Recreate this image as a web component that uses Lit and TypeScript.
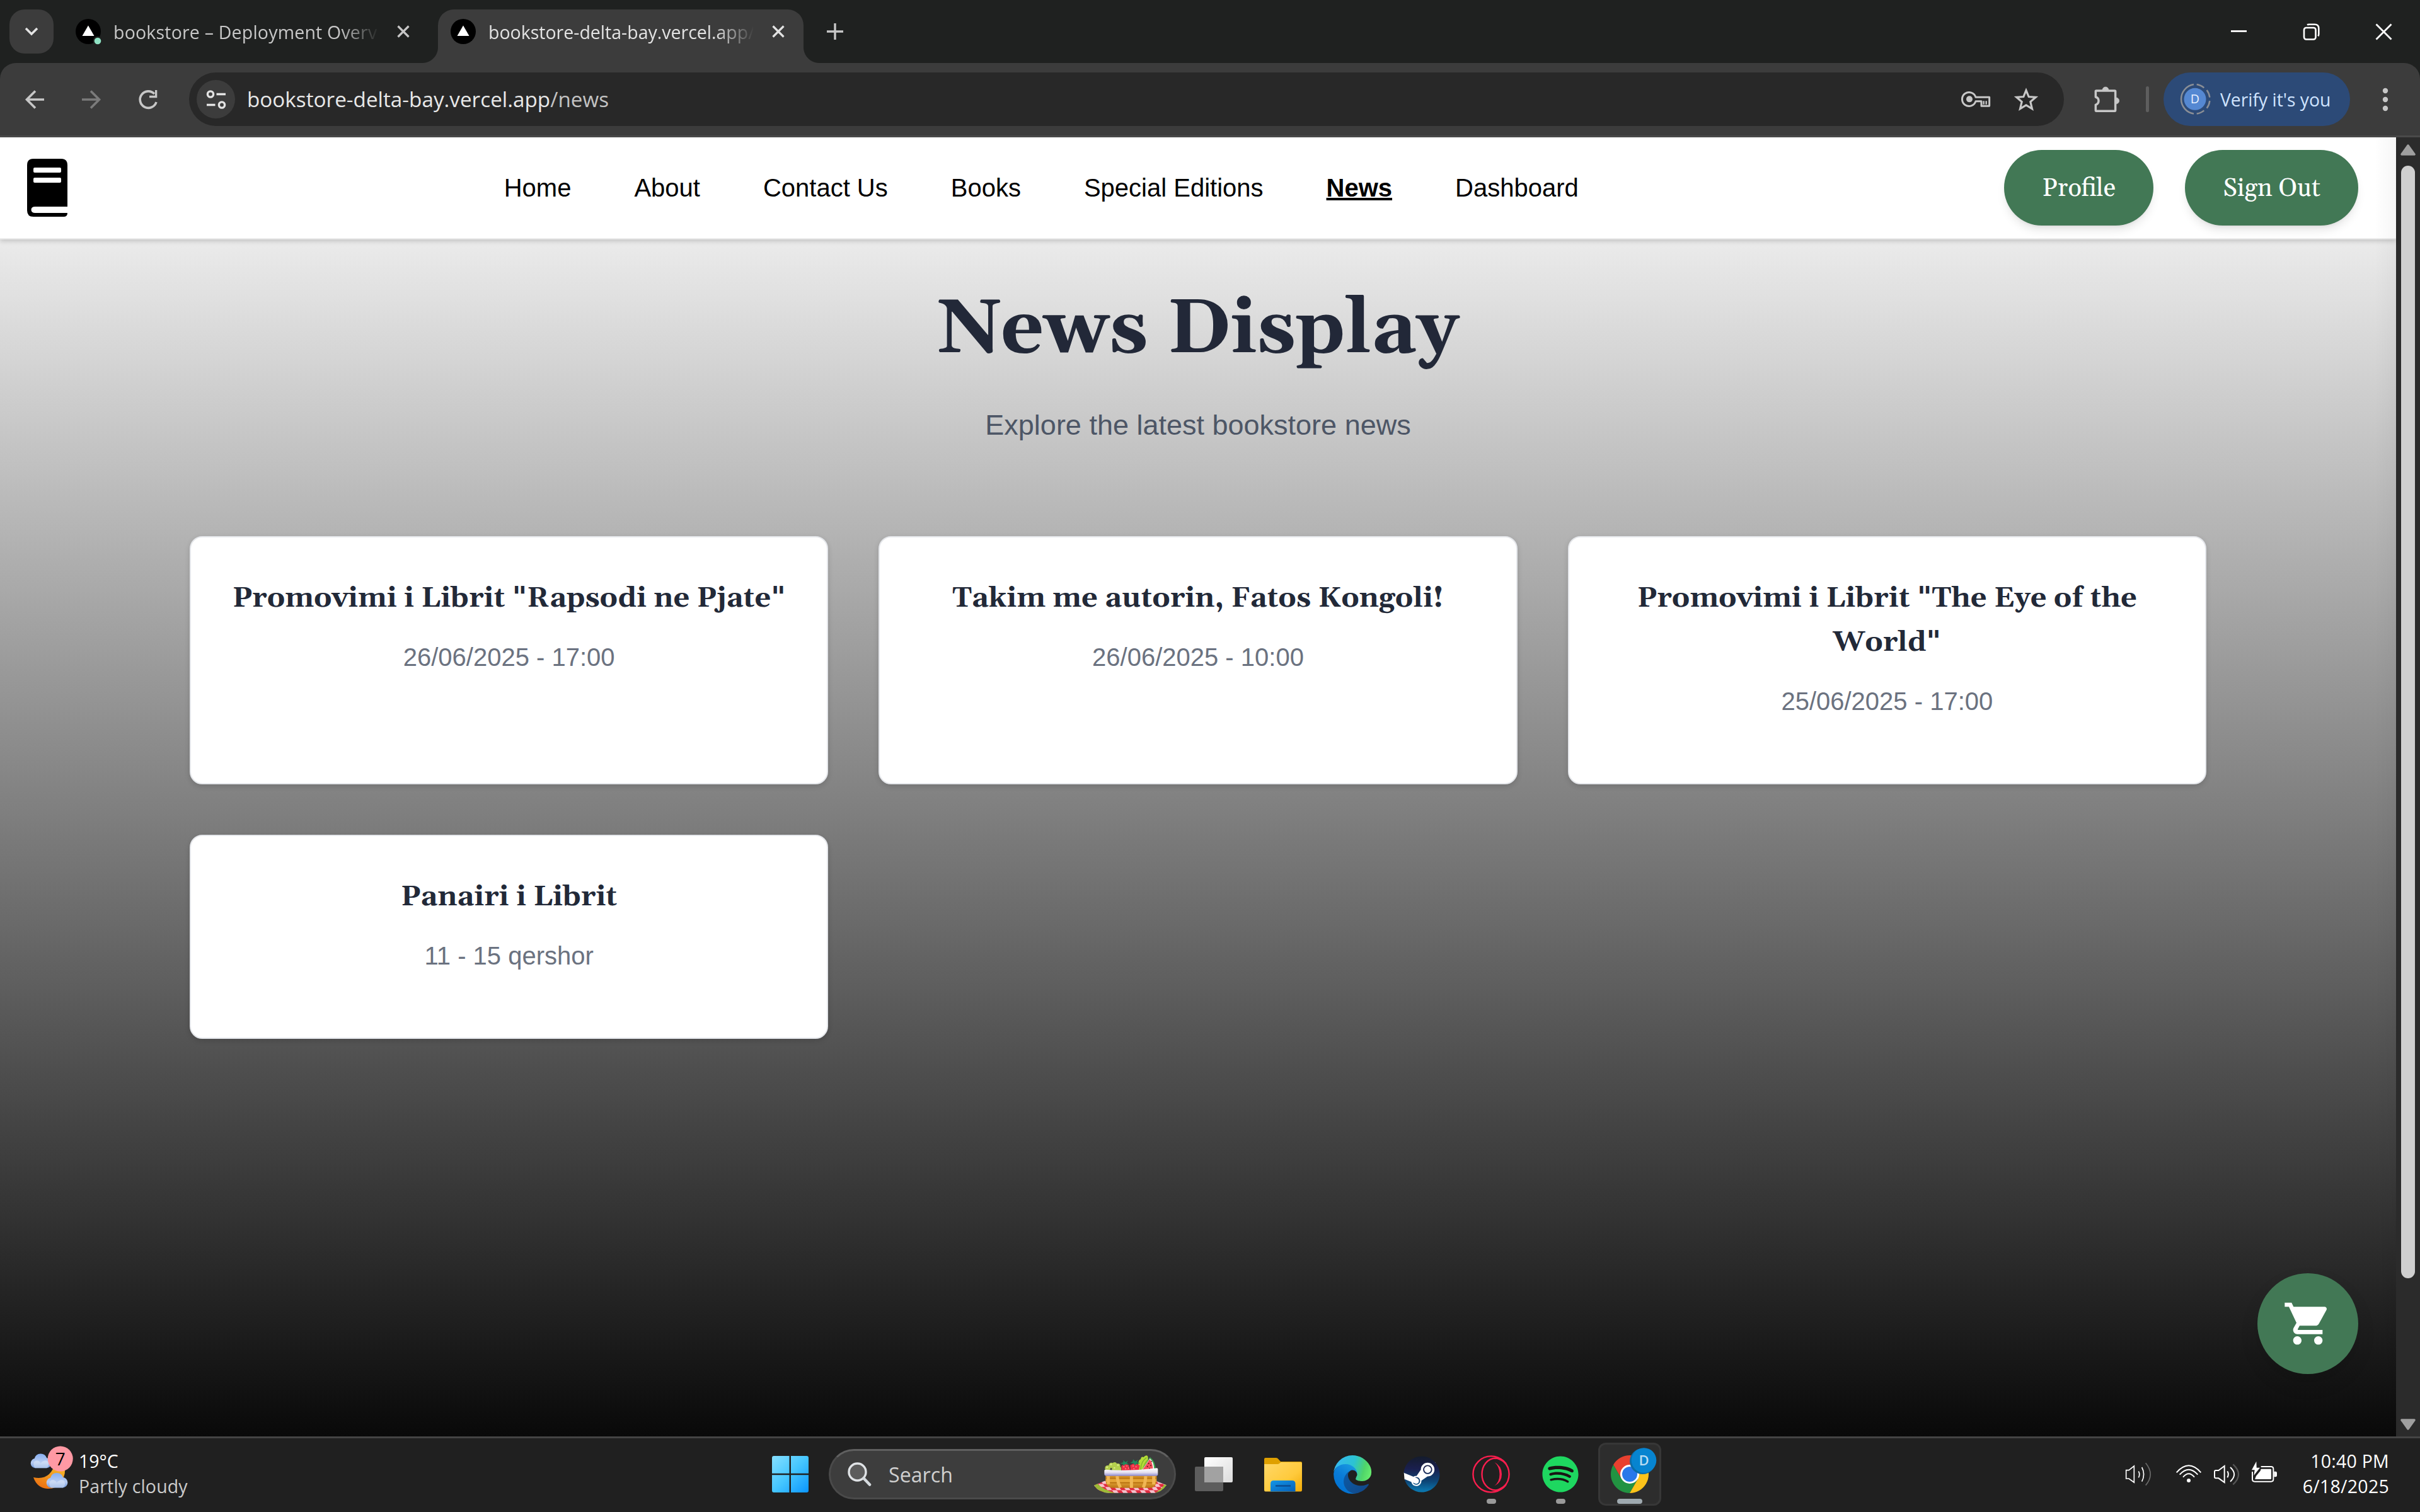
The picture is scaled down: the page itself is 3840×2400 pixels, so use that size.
import { LitElement, html, css, svg, nothing } from "lit";
import { customElement, property } from "lit/decorators.js";
import { classMap } from "lit/directives/class-map.js";

/* ---------- Browser tab strip ---------- */

@customElement("tab-strip")
export class TabStrip extends LitElement {
  static styles = css`
    :host { display: flex; height: 100px; background: #1f2120; color: #e3e3e3; font-family: "Segoe UI Variable", "Open Sans", sans-serif; }
    .pad { padding: 15px 0 0 15px; width: 100px; box-sizing: border-box; }
    .menu { width: 70px; height: 70px; border-radius: 24px; background: #3c3c3c; display: flex; align-items: center; justify-content: center; }
    .tab { position: relative; width: 580px; height: 85px; margin-top: 15px; box-sizing: border-box; padding: 0 30px 15px 20px; display: flex; align-items: center; }
    .tab.first { margin-right: 15px; color: #c7c7c7; }
    .tab.active { background: #3c3c3c; border-radius: 25px 25px 0 0; }
    .tab.active::before, .tab.active::after { content: ""; position: absolute; bottom: 0; width: 25px; height: 25px; }
    .tab.active::before { left: -25px; background: radial-gradient(circle at 0 0, transparent 24.5px, #3c3c3c 25.5px); }
    .tab.active::after { right: -25px; background: radial-gradient(circle at 100% 0, transparent 24.5px, #3c3c3c 25.5px); }
    .fav { width: 42px; height: 42px; margin-right: 18px; flex: none; }
    .label { width: 420px; margin-right: 29px; white-space: nowrap; font-size: 28.5px; line-height: 40px; padding-top: 2px; -webkit-mask-image: linear-gradient(90deg, #000 360px, transparent 422px); mask-image: linear-gradient(90deg, #000 360px, transparent 422px); }
    .first .label { letter-spacing: .2px; }
    .x { width: 22px; height: 22px; flex: none; }
    .plus { width: 30px; height: 30px; margin: 35px 0 0 35px; }
    .win { margin-left: auto; display: flex; align-items: center; gap: 88px; padding-right: 44px; height: 100px; }
    .win svg { width: 27px; height: 27px; }
  `;

  private tab(label: string, active: boolean) {
    return html`<div class=${classMap({ tab: true, active, first: !active })}>
      <svg class="fav" viewBox="0 0 42 42">
        <circle cx="20" cy="21" r="20" fill="#000"/>
        <path d="M20 11.5 29.5 28h-19z" fill="#fff"/>
        ${active ? nothing : svg`<circle cx="35" cy="36" r="7.5" fill="#1f2120"/><circle cx="35" cy="36" r="5.3" fill="#8fe3c4"/>`}
      </svg>
      <span class="label">${label}</span>
      <svg class="x" viewBox="0 0 22 22"><path d="M2.5 2.5l17 17M19.500 2.500l-17 17" stroke="currentColor" stroke-width="3.2"/></svg>
    </div>`;
  }

  render() {
    return html`
      <div class="pad"><div class="menu"><svg width="22" height="14" viewBox="0 0 22 14"><path d="M2 2l9 9 9-9" fill="none" stroke="#e3e3e3" stroke-width="3.6"/></svg></div></div>
      ${this.tab("bookstore – Deployment Overvi", false)}
      ${this.tab("bookstore-delta-bay.vercel.app/", true)}
      <svg class="plus" viewBox="0 0 30 30"><path d="M15 2v26M2 15h26" stroke="#c7c7c7" stroke-width="3.4"/></svg>
      <div class="win">
        <svg viewBox="0 0 27 27"><path d="M1 12.500h25" stroke="#fff" stroke-width="2.800"/></svg>
        <svg viewBox="0 0 27 27"><rect x="2" y="7" width="18.500" height="18.500" rx="3.500" fill="none" stroke="#fff" stroke-width="2.600"/><path d="M7 2.500Q8 1.800 10 1.800h9q6.300 0 6.300 6.300v9q0 2-1 3.200" fill="none" stroke="#fff" stroke-width="2.600"/></svg>
        <svg viewBox="0 0 27 27"><path d="M1.500 1.500l24 24M25.500 1.500l-24 24" stroke="#fff" stroke-width="2.800"/></svg>
      </div>`;
  }
}

/* ---------- Address toolbar ---------- */

@customElement("address-bar")
export class AddressBar extends LitElement {
  static styles = css`
    :host { display: block; background: #1f2120; }
    .bar { height: 118px; box-sizing: border-box; display: flex; align-items: center; background: #3c3c3c; border-radius: 25px 25px 0 0; border-bottom: 3px solid #4a4a4a; padding: 0 50px 0 38px; font-family: "Segoe UI Variable", "Open Sans", sans-serif; }
    .navs { display: flex; gap: 56px; width: 262px; }
    .navs svg { width: 34px; height: 34px; flex: none; }
    .omni { width: 2975px; height: 85px; box-sizing: border-box; border-radius: 43px; background: #282828; display: flex; align-items: center; padding: 0 40px 0 12px; }
    .site { width: 61px; height: 61px; border-radius: 50%; background: #3c3c3c; display: flex; align-items: center; justify-content: center; margin-right: 19px; }
    .url { flex: 1; font-size: 33.2px; letter-spacing: .04px; line-height: 50px; color: #e8e8e8; white-space: nowrap; }
    .url .path { color: #c3c3c3; }
    .star { margin-left: 36px; }
    .puzzle { margin-left: 48px; }
    .sep { width: 5px; height: 41px; border-radius: 3px; background: #5e5e5e; margin: 0 23px 0 41px; }
    .verify { width: 296px; height: 85px; box-sizing: border-box; padding-left: 25px; border-radius: 43px; background: #2c4a77; color: #d0e4ff; display: flex; align-items: center; font-size: 28.3px; line-height: 40px; white-space: nowrap; }
    .verify svg { margin-right: 15px; }
    .dots { margin-left: auto; }
    .ava { font-size: 59px; fill: #e6f0ff; }
  `;

  render() {
    return html`<div class="bar">
      <div class="navs">
        <svg viewBox="0 0 34 34"><path d="M32 17H5M18 3.500L4.500 17 18 30.500" fill="none" stroke="#c7c7c7" stroke-width="3.600"/></svg>
        <svg viewBox="0 0 34 34"><path d="M2 17h27M16 3.500L29.500 17 16 30.500" fill="none" stroke="#7b7b7b" stroke-width="3.600"/></svg>
        <svg viewBox="0 0 34 34"><path d="M30 21A13.200 13.200 0 1 1 27 8" fill="none" stroke="#c7c7c7" stroke-width="3.600"/><path d="M31.300 2v12.200H19v-3.400h9V2z" fill="#c7c7c7"/></svg>
      </div>
      <div class="omni">
        <div class="site"><svg width="34" height="34" viewBox="0 0 34 34" fill="none" stroke="#e3e3e3" stroke-width="3.400"><circle cx="8" cy="8.500" r="4.600"/><path d="M17.500 8.500H32M2 25.500h13.500"/><circle cx="26" cy="25.500" r="4.600"/></svg></div>
        <span class="url">bookstore-delta-bay.vercel.app<span class="path">/news</span></span>
        <svg width="46.700" height="26.700" viewBox="96 103 140 80">
          <path d="M165 134H230V174Q230 176 228 176H192V153H165A33 33 0 1 1 165 134Z" fill="none" stroke="#c7c7c7" stroke-width="9" stroke-linejoin="round"/>
          <circle cx="135" cy="143" r="15" fill="#c7c7c7"/><path d="M203 152v16M215 152v16" stroke="#c7c7c7" stroke-width="7"/>
        </svg>
        <svg class="star" width="40" height="37.300" viewBox="345 84 120 112"><path d="M405 97L417.500 127.500 451 130 425.500 152 433.500 185 405 167.500 376.500 185 384.500 152 359 130 392.500 127.500Z" fill="none" stroke="#c7c7c7" stroke-width="9.500"/></svg>
      </div>
      <svg class="puzzle" width="41" height="41.300" viewBox="729 75 123 124">
        <path d="M736 98.500Q736 96 739 96H827Q830 96 830 99V189Q830 192.500 827 192.500H739Q736 192.500 736 189V163Q750 158 750 144T736 126Z" fill="none" stroke="#c7c7c7" stroke-width="10.500" stroke-linejoin="round"/>
        <path d="M768 93a15 15 0 0 1 30 0zM833 129a15 15 0 0 1 0 30z" fill="#c7c7c7" stroke="#c7c7c7" stroke-width="2"/>
      </svg>
      <div class="sep"></div>
      <div class="verify">
        <svg width="50" height="50.700" viewBox="1133 68 150 152">
          <g fill="none" stroke="#8b8f96" stroke-width="7.500">
            <path d="M1202 74.300A70.500 70.500 0 0 0 1202 213.700"/>
            <path d="M1216 74.300A70.500 70.500 0 0 1 1251 90M1264 101A70.500 70.500 0 0 1 1278 136M1278 152A70.500 70.500 0 0 1 1264 187M1251 198A70.500 70.500 0 0 1 1216 213.700"/>
          </g>
          <circle cx="1208" cy="144" r="52.500" fill="#5588d2"/>
          <text class="ava" x="1208" y="165" text-anchor="middle">D</text>
        </svg>
        <span>Verify it's you</span>
      </div>
      <svg class="dots" width="10" height="38" viewBox="0 0 10 38" fill="#c7c7c7"><circle cx="5" cy="5" r="4.200"/><circle cx="5" cy="19" r="4.200"/><circle cx="5" cy="33" r="4.200"/></svg>
    </div>`;
  }
}

/* ---------- News card ---------- */

@customElement("news-card")
export class NewsCard extends LitElement {
  @property() heading = "";
  @property() when = "";
  static styles = css`
    :host { display: block; box-sizing: border-box; background: #fff; border: 2px solid #e5e7eb; border-radius: 20px; padding: 62px 60px 100px; text-align: center; box-shadow: 0 3px 8px rgba(0, 0, 0, .14); }
    h2 { margin: 0 0 28px; font: 700 45px/70px Gelasio, Georgia, serif; color: #222938; }
    .q { font-family: "DejaVu Serif", serif; line-height: 1; }
    p { margin: 0; font: 40px/60px "Liberation Sans", Arial, sans-serif; color: #6b7280; }
  `;
  render() {
    const parts = this.heading.split(/(")/).map((t) => (t === '"' ? html`<span class="q">"</span>` : t));
    return html`<h2>${parts}</h2><p>${this.when}</p>`;
  }
}

/* ---------- Bookstore page ---------- */

const LINKS = ["Home", "About", "Contact Us", "Books", "Special Editions", "News", "Dashboard"];
const NEWS: [string, string][] = [
  ['Promovimi i Librit "Rapsodi ne Pjate"', "26/06/2025 - 17:00"],
  ["Takim me autorin, Fatos Kongoli!", "26/06/2025 - 10:00"],
  ['Promovimi i Librit "The Eye of the World"', "25/06/2025 - 17:00"],
  ["Panairi i Librit", "11 - 15 qershor"],
];

@customElement("news-page")
export class NewsPage extends LitElement {
  static styles = css`
    :host { display: flex; height: 2062px; }
    .view { position: relative; width: 3802px; display: flex; flex-direction: column; }
    .view::after { content: ""; position: absolute; inset: 0 0 0 auto; z-index: 3; width: 34px; background: linear-gradient(90deg, transparent, rgba(0, 0, 0, .035)); }
    nav { position: relative; z-index: 1; height: 162px; box-sizing: border-box; background: #fff; border-bottom: 2px solid #ebebeb; box-shadow: 0 3px 7px rgba(0, 0, 0, .17); display: flex; align-items: center; justify-content: space-between; padding: 0 60px 0 43px; }
    .logo { width: 81px; height: 92px; }
    .links { display: flex; gap: 100px; font: 40px/60px "Liberation Sans", Arial, sans-serif; color: #000; }
    .links .on { font-weight: 700; text-decoration: underline; text-decoration-thickness: 4px; text-underline-offset: 2px; }
    .btns { display: flex; gap: 50px; }
    .btn { height: 120px; box-sizing: border-box; padding: 2px 60.2px 0; border-radius: 60px; background: #427855; color: #fff; font: 40px/120px Gelasio, Georgia, serif; box-shadow: 0 10px 15px -3px rgba(0, 0, 0, .1), 0 4px 6px -4px rgba(0, 0, 0, .1); }
    main { flex: 1; background: linear-gradient(#ebebeb, #090909); padding: 84px 301px 0; text-align: center; }
    h1 { margin: 0; font: 700 120px/120px Gelasio, Georgia, serif; color: #222838; }
    .sub { margin: 56px 0 141px; font: 45px/70px "Liberation Sans", Arial, sans-serif; color: #4d5666; }
    .grid { display: grid; grid-template-columns: repeat(3, 1fr); gap: 80px; }
    .cart { position: absolute; z-index: 2; right: 60px; bottom: 99px; width: 160px; height: 160px; border-radius: 50%; background: #427855; display: flex; align-items: center; justify-content: center; box-shadow: 0 16px 30px rgba(0, 0, 0, .1); }
    .bar { flex: 1; box-sizing: border-box; background: #2b2b2b; display: flex; flex-direction: column; align-items: center; padding: 11px 0 10px; }
    .thumb { width: 22px; height: 1766px; margin: 16px 0 auto; border-radius: 11px; background: #cfcfcf; }
  `;
  render() {
    return html`
      <div class="view">
        <nav>
          <svg class="logo" viewBox="0 0 81 92">
            <path d="M10 0H54Q64 0 64 10V76H13Q6.500 76 6.500 81T13 86H64Q64 92 58 92H10Q0 92 0 82V10Q0 0 10 0Z"/>
            <path d="M12 14h40q2 0 2 2v4q0 2-2 2H12q-2 0-2-2v-4q0-2 2-2zM12 30h40q2 0 2 2v4q0 2-2 2H12q-2 0-2-2v-4q0-2 2-2z" fill="#fff"/>
          </svg>
          <div class="links">${LINKS.map((l) => html`<span class=${classMap({ on: l === "News" })}>${l}</span>`)}</div>
          <div class="btns"><div class="btn">Profile</div><div class="btn">Sign Out</div></div>
        </nav>
        <main>
          <h1>News Display</h1>
          <p class="sub">Explore the latest bookstore news</p>
          <div class="grid">${NEWS.map(([h, w]) => html`<news-card .heading=${h} .when=${w}></news-card>`)}</div>
        </main>
        <div class="cart"><svg width="80" height="80" viewBox="0 0 24 24" fill="#fff"><path d="M7 18c-1.100 0-1.990.9-1.990 2S5.900 22 7 22s2-.9 2-2-.9-2-2-2zM1 2v2h2l3.600 7.590-1.350 2.450c-.16.28-.25.61-.25.96 0 1.100.9 2 2 2h12v-2H7.420c-.14 0-.25-.11-.25-.25l.03-.12.9-1.630h7.450c.75 0 1.410-.41 1.750-1.030l3.580-6.490c.08-.14.12-.31.12-.48 0-.55-.45-1-1-1H5.210l-.94-2H1zm16 16c-1.100 0-1.990.9-1.990 2s.89 2 1.990 2 2-.9 2-2-.9-2-2-2z"/></svg></div>
      </div>
      <div class="bar">
        <svg width="24" height="18" viewBox="0 0 24 18"><path d="M12 2L22 16H2z" fill="#9f9f9f" stroke="#9f9f9f" stroke-width="3.500" stroke-linejoin="round"/></svg>
        <div class="thumb"></div>
        <svg width="24" height="18" viewBox="0 0 24 18"><path d="M12 16L2 2H22z" fill="#9f9f9f" stroke="#9f9f9f" stroke-width="3.500" stroke-linejoin="round"/></svg>
      </div>`;
  }
}

/* ---------- Taskbar ---------- */

const cloud = (x: number, y: number, s: number) => svg`<g transform="translate(${x} ${y}) scale(${s})">
  <path d="M8 23a8 8 0 0 1-1-15.800A10.500 10.500 0 0 1 27 6.500 8.300 8.300 0 0 1 27 23z" fill="url(#cl)"/>
  <path d="M8 23a8 8 0 0 1 0-12Q14 9 17 15 22 9 28 11a8 8 0 0 1-1 12z" fill="#dde7f8" opacity=".55"/>
</g>`;

@customElement("task-bar")
export class TaskBar extends LitElement {
  static styles = css`
    :host { display: flex; height: 120px; box-sizing: border-box; border-top: 3px solid #444; background: #202020; color: #fff; font: 28.5px/40px "Segoe UI Variable", "Open Sans", sans-serif; }
    .weather { width: 1219px; display: flex; box-sizing: border-box; padding-left: 48px; }
    .weather svg { width: 72px; height: 76px; margin: 10px 5px 0 0; }
    .lines { padding-top: 16px; white-space: nowrap; }
    .dim { color: #cbcbcb; letter-spacing: .15px; }
    .apps { display: flex; align-items: center; height: 114px; }
    .start { width: 70px; display: flex; justify-content: center; margin-right: 26px; }
    .search { width: 551px; height: 80px; box-sizing: border-box; border-radius: 40px; background: #3d3d3d; border: 3px solid #4a4a4a; border-top-color: #606060; display: flex; align-items: center; padding: 0 12px 0 27px; margin-right: 5px; color: #cfcfcf; font-size: 32.2px; }
    .search span { flex: 1; padding-left: 27px; padding-top: 1px; }
    .slot { position: relative; width: 110px; height: 100px; display: flex; align-items: center; justify-content: center; }
    .slot svg { width: 60px; height: 60px; overflow: visible; }
    .slot.on::before { content: ""; position: absolute; inset: 0 5px; box-sizing: border-box; border: 3px solid #373737; border-radius: 12px; background: #2d2d2d; }
    .slot.on svg { position: relative; }
    .run::after { content: ""; position: absolute; bottom: 3px; left: 47.500px; width: 15px; height: 8px; border-radius: 4px; background: #9a9a9a; }
    .on.run::after { left: 35px; width: 40px; background: #9faab0; }
    .tray { margin-left: auto; display: flex; padding-right: 49px; text-align: right; }
    .tray .lines { letter-spacing: .25px; }
    .tray > svg { width: 243px; height: 40px; margin: 37px 39px 0 0; }
    .seven { font-size: 28px; }
    .dee { font-size: 22px; font-weight: 600; }
  `;

  render() {
    return html`
      <div class="weather">
        <svg viewBox="0 0 72 76">
          <defs>
            <linearGradient id="cl" x1="0" y1="0" x2="0" y2="1"><stop offset="0" stop-color="#86aef0"/><stop offset=".6" stop-color="#b9cdf2"/><stop offset="1" stop-color="#6f97dc"/></linearGradient>
            <linearGradient id="mn" x1=".8" y1="0" x2=".3" y2="1"><stop offset="0" stop-color="#f7c22c"/><stop offset="1" stop-color="#ec7012"/></linearGradient>
          </defs>
          <path d="M5 52Q32 58 40 28L54 30Q58 46 49 60 40 71 27 70 11 69 5 52Z" fill="url(#mn)"/>
          ${cloud(0, 15, 0.97)}${cloud(25, 45.5, 1)}
          <circle cx="47.700" cy="22.500" r="20" fill="#ff99a4"/>
          <text class="seven" x="47.700" y="33" text-anchor="middle" fill="#000">7</text>
        </svg>
        <div class="lines"><div>19°C</div><div class="dim">Partly cloudy</div></div>
      </div>
      <div class="apps">
        <div class="start"><svg width="58" height="58" viewBox="0 0 58 58">
          <defs><linearGradient id="w" gradientUnits="userSpaceOnUse" x1="0" y1="0" x2="58" y2="58"><stop offset="0" stop-color="#86e0ff"/><stop offset=".5" stop-color="#45c6ff"/><stop offset="1" stop-color="#0a95ff"/></linearGradient></defs>
          <path d="M3 0H27.500V27.800H0V3Q0 0 3 0ZM30 0H55Q58 0 58 3V27.800H30ZM0 30.300H27.500V58H3Q0 58 0 55ZM30 30.300H58V55Q58 58 55 58H30Z" fill="url(#w)"/></svg></div>
        <div class="search">
          <svg width="38" height="38" viewBox="0 0 38 38"><circle cx="15.500" cy="15.500" r="13.500" fill="#5c5c5c" stroke="#e0e3e6" stroke-width="3.400"/><path d="M25.500 25.500l9.500 10" stroke="#d5dade" stroke-width="4.600" stroke-linecap="round"/></svg>
          <span>Search</span>
          <svg width="115" height="60" viewBox="50 69 345 180">
            <defs>
              <pattern id="ck" width="44" height="30" patternUnits="userSpaceOnUse" patternTransform="translate(60 190) skewX(35)"><rect width="44" height="30" fill="#f7c3cd"/><rect width="22" height="15" fill="#e12a3f"/><rect x="22" y="15" width="22" height="15" fill="#e12a3f"/></pattern>
              <linearGradient id="bk" x1="0" y1="0" x2="0" y2="1"><stop offset="0" stop-color="#c98419"/><stop offset=".5" stop-color="#e8a83a"/><stop offset="1" stop-color="#b87414"/></linearGradient>
              <linearGradient id="rim" x1="0" y1="0" x2="0" y2="1"><stop offset="0" stop-color="#fff"/><stop offset=".55" stop-color="#e6e2f0"/><stop offset="1" stop-color="#8d8bd0"/></linearGradient>
            </defs>
            <path d="M50 212L100 191H345L395 211Q370 244 340 248H120Q70 245 50 212Z" fill="url(#ck)"/>
            <path d="M50 212L66 205Q100 236 150 248H120Q72 245 50 212ZM395 211Q372 244 340 248Q370 234 384 208Z" fill="#9dba36"/>
            <g fill="#b5cf4e"><circle cx="115" cy="130" r="13"/><circle cx="133" cy="117" r="13"/><circle cx="148" cy="133" r="13"/><circle cx="163" cy="120" r="12"/><circle cx="148" cy="112" r="10"/><circle cx="168" cy="134" r="12"/></g>
            <g fill="#dcea8e"><circle cx="112" cy="126" r="4"/><circle cx="131" cy="113" r="4"/><circle cx="147" cy="129" r="4"/><circle cx="164" cy="116" r="4"/></g>
            <path d="M262 140Q256 90 272 88 274 72 286 78 298 64 306 74 310 90 300 140Z" fill="#b4dc38"/>
            <path d="M272 138Q272 100 300 80M282 138Q288 110 304 92" stroke="#7fb52a" stroke-width="4" fill="none"/>
            <path d="M180 120Q196 104 216 116L222 142H182ZM222 116Q244 100 268 118L262 142H224Z" fill="#ee2f45"/>
            <g fill="#ffc2a8"><circle cx="192" cy="124" r="2.500"/><circle cx="206" cy="120" r="2.500"/><circle cx="200" cy="133" r="2.500"/><circle cx="236" cy="120" r="2.500"/><circle cx="250" cy="124" r="2.500"/><circle cx="240" cy="133" r="2.500"/><circle cx="214" cy="130" r="2.500"/></g>
            <path d="M174 108L190 102 188 92 200 102 212 94 206 106 216 112 198 112 190 120 188 110ZM222 104L234 98 236 88 246 98 260 90 254 102 270 106 252 110 244 118 240 108Z" fill="#1f8a5c"/>
            <path d="M276 142L316 77Q346 100 342 142Z" fill="#3da34e"/><path d="M276 142L316 84Q338 104 335 142Z" fill="#fff"/><path d="M278 142L315 88Q332 108 330 142Z" fill="#f5505c"/>
            <g fill="#5a1a20"><circle cx="310" cy="108" r="3"/><circle cx="320" cy="118" r="3"/><circle cx="304" cy="122" r="3"/><circle cx="314" cy="132" r="3"/><circle cx="324" cy="98" r="2.500"/></g>
            <path d="M105 160H348V192Q345 218 325 224H132Q108 218 105 192Z" fill="url(#bk)"/>
            <path d="M105 178H348M107 200H346" stroke="#b5700f" stroke-width="5"/>
            <path d="M118 168V206M160 168Q164 205 176 222M228 168V224M296 168Q294 205 284 222M334 168V208" stroke="#f0b653" stroke-width="15" fill="none"/>
            <path d="M99 142Q99 137 104 137Q226 146 350 130Q354 131 354 136V160Q354 167 346 167H110Q99 167 99 158Z" fill="url(#rim)"/>
          </svg>
        </div>
        <div class="slot"><svg viewBox="0 0 60 60"><defs><linearGradient id="tv" x1="0" y1="0" x2="1" y2="1"><stop offset="0" stop-color="#fff"/><stop offset="1" stop-color="#dcdcdc"/></linearGradient></defs>
          <rect x="15" y="3" width="45" height="40" rx="2" fill="url(#tv)"/><rect x="0" y="18" width="45" height="39" rx="2" fill="#5d5d5d"/><path d="M15 18H45V43H15z" fill="#a2a2a2"/></svg></div>
        <div class="slot"><svg viewBox="0 0 60 60"><defs>
            <linearGradient id="fo" x1="0" y1="0" x2="1" y2="1"><stop offset="0" stop-color="#ffd868"/><stop offset=".6" stop-color="#ffca3c"/><stop offset="1" stop-color="#f2ab07"/></linearGradient>
            <linearGradient id="fb" x1="0" y1="0" x2="1" y2="1"><stop offset="0" stop-color="#1496e6"/><stop offset="1" stop-color="#0560ba"/></linearGradient></defs>
          <path d="M2 4H19Q21 4 22.500 6L26 10H58Q60 10 60 12V30H0V6Q0 4 2 4Z" fill="#dfa000"/>
          <path d="M0 14H21Q23 14 24.500 12.500L26.500 11H58Q60 11 60 13V55Q60 57.500 58 57.500H2Q0 57.500 0 55Z" fill="url(#fo)"/>
          <path d="M10 57.500V45Q10 40 15 40H44Q49.500 40 49.500 45V57.500Z" fill="url(#fb)"/><path d="M18 48.500H42" stroke="#0a4d92" stroke-width="2.500"/></svg></div>
        <div class="slot"><svg viewBox="-.7 -4.500 256 256"><defs>
            <linearGradient id="e1" x1=".2" y1="0" x2="1" y2=".6"><stop offset="0" stop-color="#0c59a4"/><stop offset="1" stop-color="#114a8b"/></linearGradient>
            <linearGradient id="e2" x1=".8" y1="0" x2=".3" y2="1"><stop offset="0" stop-color="#1b9de2"/><stop offset=".5" stop-color="#0a7cd8"/><stop offset="1" stop-color="#0070d0"/></linearGradient>
            <linearGradient id="e3" x1="0" y1=".4" x2="1" y2=".6"><stop offset="0" stop-color="#35b8f1"/><stop offset=".5" stop-color="#2cc3d2"/><stop offset=".8" stop-color="#4fd56a"/><stop offset="1" stop-color="#66eb6e"/></linearGradient></defs>
          <path fill="url(#e1)" d="M231.070 190.540c-3.400 1.800-6.900 3.400-10.500 4.700a101.100 101.100 0 0 1-35.600 6.500c-47 0-87.900-32.300-87.900-73.800a31.300 31.300 0 0 1 16.300-27.200c-42.500 1.800-53.400 46.100-53.400 72 0 73.400 67.600 80.800 82.200 80.800 7.900 0 19.800-2.300 27-4.600l1.300-.4a128.300 128.300 0 0 0 66.600-52.800 4 4 0 0 0-5.300-5.700z"/>
          <path fill="url(#e2)" d="M105.730 241.420a79.200 79.200 0 0 1-22.700-21.300 80.700 80.700 0 0 1 29.500-120c3.200-1.500 8.500-4.100 15.600-4a32.400 32.400 0 0 1 25.700 13 31.900 31.900 0 0 1 6.300 18.700c0-.2 24.500-79.600-80-79.600-43.900 0-80 41.600-80 78.200a130.200 130.200 0 0 0 12.100 56 128 128 0 0 0 156.400 67 75.500 75.500 0 0 1-62.800-8z"/>
          <path fill="url(#e3)" d="M152.330 148.860c-.9 1-3.400 2.500-3.400 5.600 0 2.600 1.700 5.200 4.800 7.300 14.300 10 41.400 8.600 41.500 8.600 10.700 0 21.100-2.900 30.300-8.300a61.400 61.400 0 0 0 30.400-52.900c.3-22.400-8-37.300-11.300-43.900C223.230 23.900 177.330-4.500 127.330-4.500a128 128 0 0 0-128 126.200c.5-36.500 36.800-66 80-66 3.500 0 23.500.3 42 10 16.300 8.600 24.900 19 30.800 29.200 6.200 10.700 7.300 24.100 7.300 29.500s-2.700 13.300-7.800 19.900z"/></svg></div>
        <div class="slot"><svg viewBox="-.6 -.6 25.200 25.200"><defs><linearGradient id="st" x1="0" y1="0" x2="0" y2="1"><stop offset="0" stop-color="#141c2c"/><stop offset=".35" stop-color="#1a1f4e"/><stop offset=".7" stop-color="#0d4677"/><stop offset="1" stop-color="#0b7cb5"/></linearGradient></defs>
          <path d="M.1 10.800L6.500 12.500 11 4H21V14L12 20H6L.5 15.500Z" fill="#fff"/>
          <path fill="url(#st)" d="M11.979 0C5.678 0 .511 4.860.022 11.037l6.432 2.658c.545-.371 1.203-.59 1.912-.59.063 0 .125.004.188.006l2.861-4.142V8.910c0-2.495 2.028-4.524 4.524-4.524 2.494 0 4.524 2.031 4.524 4.527s-2.030 4.525-4.524 4.525h-.105l-4.076 2.911c0 .052.004.105.004.159 0 1.875-1.515 3.396-3.390 3.396-1.635 0-3.016-1.173-3.331-2.727L.436 15.270C1.862 20.307 6.486 24 11.979 24c6.627 0 11.999-5.373 11.999-12S18.605 0 11.979 0zM7.540 18.210l-1.473-.61c.262.543.714.999 1.314 1.250 1.297.539 2.793-.076 3.332-1.375.263-.63.264-1.319.005-1.949s-.75-1.121-1.377-1.383c-.624-.26-1.290-.249-1.878-.03l1.523.63c.956.4 1.409 1.500 1.009 2.455-.397.957-1.497 1.410-2.454 1.012H7.540zm11.415-9.303c0-1.662-1.353-3.015-3.015-3.015-1.665 0-3.015 1.353-3.015 3.015 0 1.665 1.350 3.015 3.015 3.015 1.663 0 3.015-1.350 3.015-3.015zm-5.273-.005c0-1.252 1.013-2.266 2.265-2.266 1.249 0 2.266 1.014 2.266 2.266 0 1.251-1.017 2.265-2.266 2.265-1.253 0-2.265-1.014-2.265-2.265z"/></svg></div>
        <div class="slot run"><svg viewBox="0 0 60 60" fill="none" stroke="#fa1e4e" stroke-width="2.400"><circle cx="30" cy="30" r="28.600"/><path d="M52 12Q46 4.500 37 4.500C24.500 5 15.500 16 15.500 30S24.500 55 37 55.500Q46 55.500 52 48"/><path d="M44 5.500Q50 8 54 14 50 8.500 38 4zM44 54.500Q50 52 54 46 50 51.500 38 56z" fill="#fa1e4e"/><path d="M35.500 11Q47 17 47 30T35.500 48.500Q43.500 42 43.500 30T35.500 11Z" fill="#fa1e4e" stroke="none"/></svg></div>
        <div class="slot run"><svg viewBox="-.6 -.6 25.200 25.200"><circle cx="12" cy="12" r="11.500" fill="#191414"/><path fill="#1ed760" d="M12 0C5.400 0 0 5.400 0 12s5.400 12 12 12 12-5.400 12-12S18.660 0 12 0zm5.521 17.340c-.24.359-.66.48-1.021.24-2.820-1.740-6.360-2.101-10.561-1.141-.418.122-.779-.179-.899-.539-.12-.421.18-.78.54-.9 4.560-1.021 8.520-.6 11.640 1.320.42.18.479.659.301 1.020zm1.440-3.300c-.301.42-.841.6-1.262.3-3.239-1.980-8.159-2.580-11.939-1.380-.479.12-1.020-.12-1.140-.6-.12-.48.12-1.021.6-1.141C9.600 9.900 15 10.561 18.720 12.840c.361.181.54.78.241 1.200zm.12-3.360C15.240 8.400 8.820 8.160 5.160 9.301c-.6.179-1.200-.181-1.380-.721-.18-.601.18-1.200.72-1.381 4.260-1.260 11.280-1.020 15.721 1.621.539.3.719 1.020.419 1.560-.299.421-1.020.599-1.559.3z"/></svg></div>
        <div class="slot on run"><svg viewBox="0 0 60 60">
          <path d="M4 15A30 30 0 0 1 56 15L30 15 17 37.500Z" fill="#e8402f"/><path d="M4 15A30 30 0 0 0 30 60L43 37.500 17 37.500Z" fill="#229342"/><path d="M56 15A30 30 0 0 1 30 60L43 37.500 43 22.500 30 15Z" fill="#fcc31a"/>
          <circle cx="30" cy="30" r="15" fill="#fff"/><circle cx="30" cy="30" r="12" fill="#2a78ea"/>
          <circle cx="50.500" cy="9.500" r="20.500" fill="#0b6ca8"/><circle cx="52.500" cy="8" r="19.800" fill="#0784d0"/>
          <text class="dee" x="52.500" y="16" text-anchor="middle" fill="#b9dcf2">D</text></svg></div>
      </div>
      <div class="tray">
        <svg viewBox="156 1020 729 120" fill="none" stroke="#fff" stroke-width="5">
          <path d="M161 1061H174L199 1041V1119L174 1101H161Z"/><path d="M220 1066Q229 1081 220 1096M236 1047Q254 1081 236 1115"/><path d="M254 1027Q299 1081 254 1133" stroke="#6a6a6a"/>
          <g stroke-width="6"><path d="M401 1072Q459 1006 517 1072M416 1082Q459 1035 502 1082M432 1094Q459 1062 486 1094"/></g><circle cx="459" cy="1110" r="9" fill="#fff" stroke="none"/>
          <g stroke-width="6"><path d="M582 1068Q582 1062 588 1062H601L629 1041V1119L601 1099H588Q582 1099 582 1093Z"/><path d="M643 1066Q652 1081 643 1096M657 1047Q694 1081 657 1115"/><path d="M670 1033Q722 1081 670 1129" stroke="#555" stroke-width="7"/></g>
          <path d="M762 1068V1104Q762 1115 773 1115H851Q862 1115 862 1104V1055Q862 1044 851 1044H803" stroke-width="6"/><path d="M865 1067H872Q879 1067 879 1074V1086Q879 1093 872 1093H865Z" fill="#fff" stroke="none"/>
          <path d="M803 1055H848Q852 1055 852 1059V1100Q852 1104 848 1104H776Q774 1104 775 1101L780 1088 800 1064Z" fill="#fff" stroke="none"/>
          <path d="M781 1019L759 1060H773L769 1086 798 1049H782Z" fill="#fff" stroke="none"/>
        </svg>
        <div class="lines"><div>10:40 PM</div><div>6/18/2025</div></div>
      </div>`;
  }
}

/* ---------- Desktop ---------- */

@customElement("app-root")
export class AppRoot extends LitElement {
  static styles = css`
    :host { display: flex; flex-direction: column; width: 3840px; height: 2400px; overflow: hidden; }
  `;
  render() {
    return html`<tab-strip></tab-strip><address-bar></address-bar><news-page></news-page><task-bar></task-bar>`;
  }
}
